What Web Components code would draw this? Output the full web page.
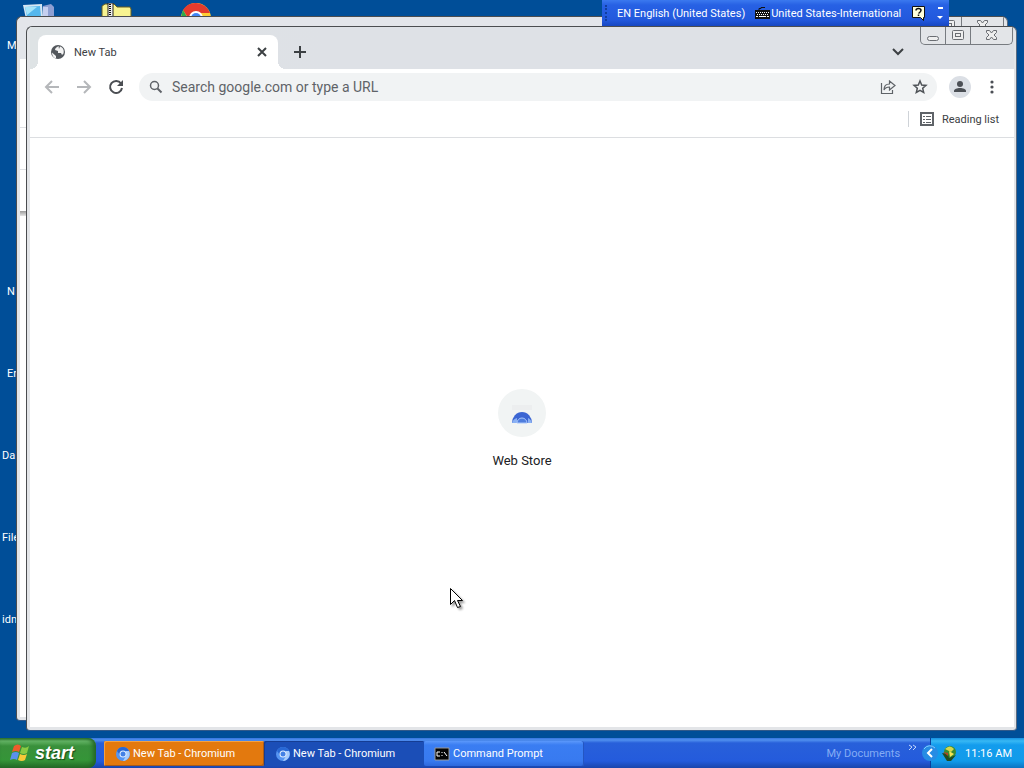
<!DOCTYPE html>
<html lang="en">
<head>
<meta charset="utf-8">
<title>Desktop</title>
<style>
html,body{margin:0;height:100%;overflow:hidden}
body{font-family:Roboto,"Noto Sans",sans-serif;font-size:11px;background:#004e98}
</style>
</head>
<body>
<xp-desktop></xp-desktop>
<script>
function define(name, markup) {
  const template = document.createElement('template');
  template.innerHTML = '<style>*{box-sizing:border-box}button,input{font:inherit;color:inherit;margin:0;padding:0;border:0;background:none;outline:0}svg{display:block;flex:none}</style>' + markup;
  customElements.define(name, class extends HTMLElement {
    constructor() {
      super();
      this.attachShadow({mode: 'open'}).append(template.content.cloneNode(true));
    }
  });
}

define('desktop-label', `
<style>:host{display:block;height:82px;padding-left:2px;color:#fff;line-height:16px;white-space:nowrap}:host([short]){padding-left:7px}</style>
<slot></slot>`);

define('desktop-icons', `
<style>
:host{display:block}
.pictures{display:flex;gap:47px;padding:3px 0 0 22px;height:38px}
.labels{display:flex;flex-direction:column}
</style>
<div class="pictures">
 <svg width="32" height="32" viewBox="0 0 32 32"><path d="M1 2l19-1 1 13-17 2z" fill="#d5e6f3"/><path d="M3 4l15-1 1 10-14 1z" fill="#55b7ed"/><path d="M3 4l12 0-10 8z" fill="#a5e4fa"/><path d="M21 3l8-2 3 3v13H21z" fill="#8d9fd2"/><path d="M21 4h5v13h-5z" fill="#c5cfef"/></svg>
 <svg width="32" height="32" viewBox="0 0 32 32"><path d="M1 15V3l3-2h9l3 3h13l1 2v12z" fill="#f7f391" stroke="#665d20"/><path d="M7 0h5v15H7z" fill="#eee" stroke="#222"/><path d="M9 1v13" stroke="#111" stroke-width="2" stroke-dasharray="1 1"/></svg>
 <svg width="32" height="32" viewBox="0 0 32 32"><circle cx="16" cy="15" r="15" fill="#ffce33"/><path d="M16 0A15 15 0 0 1 30 10H16L10 18 3 7A15 15 0 0 1 16 0" fill="#e33b2e"/><path d="M3 7l7 12 3 9A15 15 0 0 1 3 7" fill="#2da94f"/><circle cx="16" cy="15" r="7" fill="#fff"/><circle cx="16" cy="15" r="5" fill="#4285f4"/></svg>
</div>
<div class="labels">
 <desktop-label short>My</desktop-label><desktop-label></desktop-label><desktop-label></desktop-label>
 <desktop-label short>N</desktop-label><desktop-label short>Er</desktop-label><desktop-label>Da</desktop-label><desktop-label>File</desktop-label><desktop-label>idm</desktop-label>
</div>`);

define('caption-buttons', `
<style>
:host{display:flex;height:18px;border:1px solid #777b80;border-top:0;border-radius:0 0 5px 5px;background:#e3e5e8}
button{width:25px;display:flex;align-items:center;justify-content:center;border-right:1px solid #777b80}
button:last-child{width:41px;border:0}
</style>
<button aria-label="Minimize"><svg width="13" height="13"><rect x="0.500" y="7.500" width="11" height="4" rx="2" fill="#eee" stroke="#6a6d72"/></svg></button>
<button aria-label="Restore"><svg width="13" height="13"><rect x="0.500" y="1.500" width="11" height="9" rx="1" fill="#eee" stroke="#6a6d72"/><rect x="3.500" y="4.500" width="5" height="3" fill="#eee" stroke="#6a6d72"/></svg></button>
<button aria-label="Close"><svg width="13" height="13" viewBox="0 0 13 13"><path d="M1.500 1.500h3l2 2.500 2-2.500h3v2l-2.500 2.500 2.500 2.500v2h-3l-2-2.500-2 2.500h-3v-2l2.500-2.500-2.500-2.500z" fill="#eee" stroke="#6a6d72"/></svg></button>`);

define('window-frame', `
<style>
:host{display:flex;flex-direction:column;border:1px solid #4b4d50;border-right-color:#5b6b80;border-bottom-color:#31598a;border-radius:6px 6px 4px 4px;background:#e3e5e8;padding:0 2px 3px 3px;overflow:hidden}
.caption{position:absolute;top:0;right:3px;display:flex}
.body{flex:1;display:flex;flex-direction:column;min-height:0}
</style>
<div class="caption"><caption-buttons></caption-buttons></div>
<div class="body"><slot></slot></div>`);

define('hidden-page', `
<style>
:host{flex:1;display:flex;flex-direction:column;background:linear-gradient(#e3e5ea 42px,#fff 42px)}
.bar{height:110px}.row{height:42px;border-top:1px solid #dfe1e4}
.edge{height:5px;background:linear-gradient(#999,#e6e6e6)}
</style>
<div class="bar"></div><div class="row"></div><div class="row"></div><div class="edge"></div>`);

define('browser-tab', `
<style>
:host{display:flex;align-items:center;width:240px;height:34px;padding:0 9px 0 12px;background:#fff;border-radius:8px 8px 0 0;color:#3c4043;position:relative}
:host::before,:host::after{content:"";position:absolute;bottom:0;width:8px;height:8px}
:host::before{left:-8px;background:radial-gradient(circle at 0 0,transparent 8px,#fff 8px)}
:host::after{right:-8px;background:radial-gradient(circle at 100% 0,transparent 8px,#fff 8px)}
span{flex:1;padding-left:8px}
button{display:flex}
</style>
<svg width="16" height="16" viewBox="0 0 16 16"><circle cx="8" cy="8" r="7" fill="#53575c"/><path d="M2 8.500l4 3.500v2.500C3.500 14 2 11.500 2 8.500zM8.500 2C6.500 3.500 5 4 5 6l3 1v2h3l1 2 1.500-1.500C14.500 5 12 3 10 2.500L9 5z" fill="#fff" opacity=".93"/></svg>
<span><slot></slot></span>
<button aria-label="Close tab"><svg width="14" height="14"><path d="M3 3l8 8M11 3l-8 8" stroke="#3c4043" stroke-width="2"/></svg></button>`);

define('tab-strip', `
<style>
:host{display:flex;align-items:flex-end;height:42px;padding:0 102px 0 8px;background:linear-gradient(90deg,#dee3e5,#dee1e6 30%)}
button{display:flex;align-items:center;justify-content:center;height:34px;width:28px}
.new{margin-left:8px}.search{margin-left:auto}
</style>
<browser-tab>New Tab</browser-tab>
<button class="new" aria-label="New tab"><svg width="14" height="14"><path d="M7 1v12M1 7h12" stroke="#3c4043" stroke-width="2"/></svg></button>
<button class="search" aria-label="Search tabs"><svg width="12" height="12"><path d="M1 3l5 5 5-5" fill="none" stroke="#3c4043" stroke-width="2"/></svg></button>`);

define('browser-toolbar', `
<style>
:host{display:flex;align-items:center;height:36px;padding:0 12px 0 14px;background:#fff}
button{display:flex;flex:none}
.nav{display:flex;gap:16px}
.box{flex:1;display:flex;align-items:center;height:28px;margin:0 12px 0 15px;padding:0 9px 0 10px;border-radius:14px;background:#f1f3f4;gap:16px}
input{flex:1;min-width:0;margin-left:-7px;height:26px;font-size:14px}
input::placeholder{color:#5f6368;opacity:1}
.profile{width:22px;height:22px;border-radius:50%;background:#dbdfe5;align-items:center;justify-content:center}
.menu{margin-left:11px}
</style>
<div class="nav">
<button aria-label="Back"><svg width="16" height="16"><path d="M15 8H2M8 2L2 8l6 6" fill="none" stroke="#b5b7ba" stroke-width="2"/></svg></button>
<button aria-label="Forward"><svg width="16" height="16"><path d="M1 8h13M8 2l6 6-6 6" fill="none" stroke="#b5b7ba" stroke-width="2"/></svg></button>
<button aria-label="Reload"><svg width="16" height="16"><path d="M13 4.500A6 6 0 1 0 14 9" fill="none" stroke="#4b4e53" stroke-width="2"/><path d="M15 1v6H9z" fill="#4b4e53"/></svg></button>
</div>
<div class="box">
<svg width="14" height="14"><circle cx="5.500" cy="5.500" r="4" fill="none" stroke="#5f6368" stroke-width="1.500"/><path d="M8.500 8.500l4 4" stroke="#5f6368" stroke-width="2"/></svg>
<input aria-label="Address" placeholder="Search google.com or type a URL">
<button aria-label="Share"><svg width="16" height="16" viewBox="0 0 16 16"><path d="M1.500 4v10.500h11V11M9.500 5V2L15 6.500 9.500 11V8C6.500 8 5 9 4 11c0-4 2-6 5.500-6z" fill="none" stroke="#5f6368" stroke-width="1.200"/></svg></button>
<button aria-label="Bookmark"><svg width="16" height="16" viewBox="0 0 16 16"><path d="M8 2l1.700 4 4.300.400-3.300 2.900 1 4.200L8 11.300l-3.700 2.200 1-4.200L2 6.400 6.300 6z" fill="none" stroke="#4f5358" stroke-width="1.500"/></svg></button>
</div>
<button class="profile" aria-label="Profile"><svg width="14" height="14"><circle cx="7" cy="4" r="3" fill="#4b4f55"/><path d="M1 12v-1c0-4 12-4 12 0v1z" fill="#4b4f55"/></svg></button>
<button class="menu" aria-label="Menu"><svg width="20" height="16"><g fill="#4b4f55"><circle cx="10" cy="3" r="1.600"/><circle cx="10" cy="8" r="1.600"/><circle cx="10" cy="13" r="1.600"/></g></svg></button>`);

define('bookmarks-bar', `
<style>
:host{display:flex;align-items:flex-start;justify-content:flex-end;height:33px;padding:6px 15px 0 0;background:#fff;border-bottom:1px solid #dcdee1;color:#3c4043}
button{display:flex;align-items:center;gap:8px;height:16px;padding-left:11px;border-left:1px solid #cfd3d8}
</style>
<button><svg width="14" height="14"><rect x="1" y="1" width="12" height="12" fill="none" stroke="#5f6368" stroke-width="2"/><path d="M3 4.500h2m1 0h5M3 7.500h2m1 0h5M3 10.500h2m1 0h5" stroke="#5f6368"/></svg>Reading list</button>`);

define('new-tab-page', `
<style>
:host{flex:1;display:flex;align-items:center;justify-content:center;background:#fff;padding-bottom:6px}
a{display:flex;flex-direction:column;align-items:center;gap:14px;color:#202124;text-decoration:none;font-size:13px;line-height:20px}
.disc{width:48px;height:48px;border-radius:50%;background:#f1f4f4;display:flex;align-items:center;justify-content:center}
</style>
<a href="#store"><span class="disc"><svg width="24" height="24"><path d="M2 4h20v5H2z" fill="#eceeef"/><path d="M2 22a10 11 0 0 1 20 0z" fill="#3c66d3"/><path d="M2 22c1-3 2-4 5-5v5zm20 0c-1-3-2-4-4-5v5z" fill="#8ab1f4"/><path d="M7 22a5 5 0 0 1 10 0z" fill="#4e7ddd" stroke="#a9c7fa"/></svg></span>Web Store</a>`);

define('language-bar', `
<style>
:host{display:flex;align-items:center;height:26px;width:347px;padding:0 5px 0 3px;background:linear-gradient(#3b79ef,#2761e4 5px,#2258dd 20px,#1747c2);color:#fff;white-space:nowrap}
.grip{width:3px;height:16px;border-left:2px dotted #123f9f;margin-right:9px}
.layout{display:flex;align-items:center;margin-left:9px;gap:1px}
.help{margin-left:auto}.options{margin-left:10px}
button{display:flex;align-items:center}
</style>
<span class="grip"></span>
<button>EN English (United States)</button>
<button class="layout"><svg width="16" height="14"><path d="M5 4V2.500h2v-1h4" fill="none" stroke="#111"/><rect x="1" y="4" width="15" height="9" fill="#111"/><path d="M2 6.500h13M3 8.500h12" stroke="#fff" stroke-dasharray="1 1"/><path d="M2 10.500h2m1 0h7m1 0h2" stroke="#fff"/></svg>United States-International</button>
<button class="help" aria-label="Help"><svg width="14" height="16"><path d="M.500 1.500h12v11h-1v3l-3-3h-8z" fill="#ffffdc" stroke="#111"/><path d="M4 5.500q0-2 2.500-2T9 5.500q0 1-2.500 3M6.500 9.500V11" fill="none" stroke="#111" stroke-width="1.500"/></svg></button>
<button class="options" aria-label="Options"><svg width="8" height="16"><path d="M2 3h5" stroke="#fff" stroke-width="2"/><path d="M1 11h6l-3 3z" fill="#fff"/></svg></button>`);

define('chromium-icon', `
<style>:host{display:block;flex:none}</style>
<svg width="14" height="14" viewBox="0 0 14 14"><circle cx="7" cy="7" r="7" fill="#5695f2"/><path d="M7 0a7 7 0 0 1 6 4H7L4 8 1 4a7 7 0 0 1 6-4" fill="#2868d5"/><path d="M13 4a7 7 0 0 1-6 10l3-5V4z" fill="#a8cdfd"/><circle cx="7" cy="7" r="3.500" fill="#e5f1ff"/><circle cx="7" cy="7" r="2.500" fill="#4381e5"/></svg>`);

define('task-button', `
<style>
:host{display:block;flex:0 1 160px;min-width:0}
button{display:flex;align-items:center;gap:3px;width:100%;height:25px;padding-left:12px;color:#fff;white-space:nowrap;border-radius:2px;background:linear-gradient(#5b98fb,#3a7df2 4px,#387af0 20px,#2d68dc);box-shadow:inset -1px 0 #2456c1}
:host([state=console]) button{padding-left:10px}
:host([state=alert]) button{background:#e3790e;box-shadow:inset 1px 1px #f5a140,inset -1px -1px #a75a1b}
:host([state=pressed]) button{background:#1b4eb7;box-shadow:inset 1px 1px #153d93}
</style>
<button><slot name="icon"></slot><slot></slot></button>`);

define('task-bar', `
<style>
:host{display:flex;height:30px;background:linear-gradient(#3674df,#5090ef 2px,#2860da 5px,#245bdc 23px,#1a45ab)}
.start{display:flex;align-items:center;gap:4px;width:96px;padding:0 0 0 10px;border-radius:0 8px 8px 0;color:#fff;background:linear-gradient(#2e7530,#65b566 3px,#39903b 8px,#359538 22px,#246b27);box-shadow:inset -3px 0 4px #246526;font:italic bold 18px "Liberation Sans",sans-serif;text-shadow:1px 1px 1px #174719}
.tasks{flex:1;display:flex;align-items:center;padding:1px 0 0 8px;min-width:0}
.docs{display:flex;align-items:center;gap:8px;color:#84acf4;padding-right:13px;white-space:nowrap}
.docs svg{margin-bottom:11px}
.tray{display:flex;align-items:center;gap:8px;position:relative;padding:0 12px 0 11px;color:#fff;white-space:nowrap;border-left:1px solid #0b3d9b;background:linear-gradient(#1690e2,#37b8f4 3px,#139ced 7px,#119bea 23px,#0c73c1)}
.expand{position:absolute;left:-9px;top:7px}
</style>
<button class="start"><svg width="21" height="20" viewBox="0 0 21 20"><path d="M4 3q4-3 7 0L9 9Q6 7 2 9z" fill="#ee5b2b"/><path d="M12 4q4 2 7-1l-2 7q-3 2-7 0z" fill="#8acb43"/><path d="M2 10q4-2 7 0l-2 7q-3-2-7 0z" fill="#5b91ec"/><path d="M10 11q4 2 7 0l-2 6q-3 2-7 0z" fill="#f8c938"/></svg>start</button>
<div class="tasks">
<task-button state="alert"><chromium-icon slot="icon"></chromium-icon>New Tab - Chromium</task-button>
<task-button state="pressed"><chromium-icon slot="icon"></chromium-icon>New Tab - Chromium</task-button>
<task-button state="console"><svg slot="icon" width="16" height="14" viewBox="0 0 16 14"><path d="M1 1h14v12H1z" fill="#050505" stroke="#999"/><path d="M6 5H3v4h3M8 5v1m0 2v1m2-4l3 4" fill="none" stroke="#fff"/></svg>Command Prompt</task-button>
</div>
<div class="docs">My Documents<svg width="9" height="7"><path d="M1 1l3 2-3 3M5 1l3 2-3 3" fill="none" stroke="#c3d7fc"/></svg></div>
<div class="tray"><button class="expand" aria-label="Show hidden icons"><svg width="17" height="17"><circle cx="8" cy="8" r="8" fill="#268ce4"/><path d="M2 4a7 7 0 0 1 11-1" fill="none" stroke="#80caff"/><path d="M10 4L6 8l4 4" fill="none" stroke="#fff" stroke-width="2"/></svg></button>
<svg width="15" height="15" viewBox="0 0 15 15"><circle cx="8" cy="6" r="6" fill="#3b8b32"/><path d="M3 3q5-5 9 0L9 6z" fill="#d5d74d"/><path d="M0 7l6 1 1 4 7-3-5 6H5z" fill="#214c20"/><path d="M7 5l5 3-4 3z" fill="#f5e454"/><path d="M1 6l5 1v3z" fill="#b34223"/></svg>11:16 AM</div>`);

define('mouse-pointer', `
<style>:host{display:block;filter:drop-shadow(2px 2px 1px #0006)}</style>
<svg width="14" height="21" viewBox="0 0 14 21"><path d="M.500.500v16l4-4 3 7 3-1-3-6h5z" fill="#fff" stroke="#000"/></svg>`);

define('xp-desktop', `
<style>
:host{display:flex;flex-direction:column;height:100vh;background:#004e98}
.area{flex:1;position:relative;min-height:0}
window-frame,language-bar,mouse-pointer{position:absolute}
.back{inset:16px 16px 17px 16px}
.front{inset:26px 7px 7px 26px}
language-bar{top:0;right:75px}
mouse-pointer{left:450px;top:588px}
</style>
<div class="area">
<desktop-icons></desktop-icons>
<window-frame class="back"><hidden-page></hidden-page></window-frame>
<window-frame class="front"><tab-strip></tab-strip><browser-toolbar></browser-toolbar><bookmarks-bar></bookmarks-bar><new-tab-page></new-tab-page></window-frame>
<language-bar></language-bar>
<mouse-pointer></mouse-pointer>
</div>
<task-bar></task-bar>`);
</script>
</body>
</html>
